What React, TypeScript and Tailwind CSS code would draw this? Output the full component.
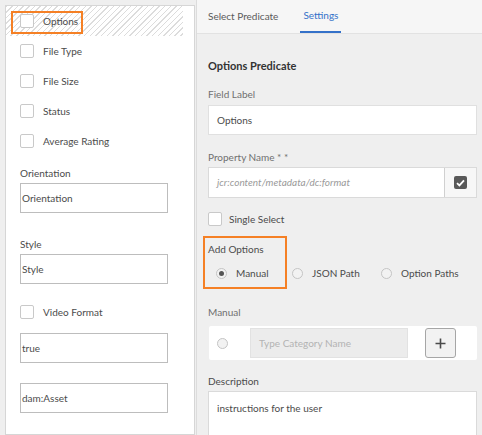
import { FC } from 'react';

const Box: FC = () => (
  <span className="w-[14px] h-[14px] shrink-0 border border-[#c9c9c9] bg-white rounded-[2px]" />
);

const Radio: FC<{ checked?: boolean }> = ({ checked }) => (
  <span className="w-[11px] h-[11px] shrink-0 rounded-full border border-[#c4c4c4] bg-[#f2f2f2] flex items-center justify-center">
    {checked && <span className="w-[5px] h-[5px] rounded-full bg-[#555]" />}
  </span>
);

const CheckRow: FC<{ label: string }> = ({ label }) => (
  <div className="h-[30px] flex items-center pl-[14px]">
    <Box />
    <span className="ml-[9px]">{label}</span>
  </div>
);

const LeftField: FC<{ label?: string; value: string }> = ({ label, value }) => (
  <div className="pl-[14px]">
    {label && <div className="h-[14px] leading-[14px] mb-[3px]">{label}</div>}
    <div className="w-[148px] h-[30px] border border-[#bdbdbd] bg-white flex items-center pl-[1px]">
      {value}
    </div>
  </div>
);

const RadioOption: FC<{ label: string; checked?: boolean; width: string }> = ({ label, checked, width }) => (
  <div className={`flex items-center whitespace-nowrap ${width}`}>
    <Radio checked={checked} />
    <span className="ml-[9px]">{label}</span>
  </div>
);

const App: FC = () => {
  return (
    <div
      className="w-[482px] h-[435px] overflow-hidden bg-[#efefef] flex text-[10px] text-[#4b4b4b]"
      style={{ fontFamily: 'Lato, "Open Sans", sans-serif' }}
    >
      {/* left panel */}
      <div className="ml-[5px] mt-[5px] w-[190px] shrink-0 bg-white border border-[#d6d6d6] relative">
        <div className="mr-[11px] bg-[repeating-linear-gradient(135deg,#dcdcdc_0px,#dcdcdc_1px,transparent_1px,transparent_4px)]">
          <CheckRow label="Options" />
        </div>
        <div className="absolute left-[5px] top-[5px] w-[72px] h-[23px] border-2 border-[#f58025]" />
        <CheckRow label="File Type" />
        <CheckRow label="File Size" />
        <CheckRow label="Status" />
        <CheckRow label="Average Rating" />
        <div className="mt-[10px] flex flex-col gap-[24px]">
          <LeftField label="Orientation" value="Orientation" />
          <LeftField label="Style" value="Style" />
        </div>
        <div className="mt-[13px]">
          <CheckRow label="Video Format" />
        </div>
        <div className="mt-[6px] flex flex-col gap-[20px]">
          <LeftField value="true" />
          <LeftField value="dam:Asset" />
        </div>
      </div>

      {/* right panel */}
      <div className="ml-[1px] flex-1 flex flex-col border-l border-[#dcdcdc]">
        <div className="h-[34px] shrink-0 bg-[#f6f6f6] border-b border-[#e2e2e2] flex items-end pl-[11px] text-[10px]">
          <div className="h-[33px] flex items-center text-[#5a5a5a]">Select Predicate</div>
          <div className="ml-[22px] h-[33px] px-[3px] flex items-center border-b-2 border-[#3471c9] text-[#3471c9]">
            Settings
          </div>
        </div>

        <div className="flex-1 pl-[11px] pr-[5px] pt-[24px] relative">
          <div className="h-[16px] flex items-center text-[11px] font-bold text-[#333]">Options Predicate</div>

          <div className="mt-[13px] h-[14px] leading-[14px] text-[#6f6f6f]">Field Label</div>
          <div className="mt-[4px] h-[30px] bg-white border border-[#e0e0e0] flex items-center pl-[8px]">
            Options
          </div>

          <div className="mt-[15px] h-[14px] leading-[14px] text-[#6f6f6f]">Property Name * *</div>
          <div className="mt-[3px] h-[31px] bg-white border border-[#dadada] flex">
            <div className="flex-1 flex items-center pl-[8px] italic text-[#9a9a9a]">
              jcr:content/metadata/dc:format
            </div>
            <div className="w-[32px] border-l border-[#d0d0d0] bg-[#f7f7f7] flex items-center justify-center">
              <span className="w-[13px] h-[13px] rounded-[2px] bg-[#595959] flex items-center justify-center">
                <svg width="9" height="8" viewBox="0 0 9 8">
                  <path d="M1 4.2 L3.4 6.4 L8 1.4" fill="none" stroke="#fff" strokeWidth="1.8" />
                </svg>
              </span>
            </div>
          </div>

          <div className="mt-[13px] h-[16px] flex items-center">
            <Box />
            <span className="ml-[7px]">Single Select</span>
          </div>

          <div className="mt-[15px] h-[14px] leading-[14px]">Add Options</div>
          <div className="mt-[10px] h-[14px] flex items-center pl-[8px]">
            <RadioOption label="Manual" checked width="w-[76px]" />
            <RadioOption label="JSON Path" width="w-[89px]" />
            <RadioOption label="Option Paths" width="w-[90px]" />
          </div>
          <div className="absolute left-[6px] top-[202px] w-[84px] h-[53px] border-2 border-[#f58025]" />

          <div className="mt-[25px] h-[14px] leading-[14px] text-[#6f6f6f]">Manual</div>
          <div className="mt-[7px] h-[34px] bg-white rounded-[2px] flex items-center pl-[8px] pr-[20px] ml-[1px]">
            <Radio />
            <div className="ml-[22px] w-[158px] h-[30px] bg-[#ececec] border border-[#e2e2e2] flex items-center pl-[8px] text-[#b3b3b3]">
              Type Category Name
            </div>
            <div className="ml-[17px] w-[31px] h-[30px] rounded-[3px] border border-[#a6a6a6] bg-[#f2f2f2] flex items-center justify-center">
              <svg width="11" height="11" viewBox="0 0 11 11">
                <path d="M5.5 0.5 V10.5 M0.5 5.5 H10.5" stroke="#4a4a4a" strokeWidth="1.6" />
              </svg>
            </div>
          </div>

          <div className="mt-[14px] h-[14px] leading-[14px]">Description</div>
          <div className="mt-[3px] h-[60px] bg-white border border-[#dadada] pl-[8px] pt-[9px]">
            instructions for the user
          </div>
        </div>
      </div>
    </div>
  );
};

export default App;
